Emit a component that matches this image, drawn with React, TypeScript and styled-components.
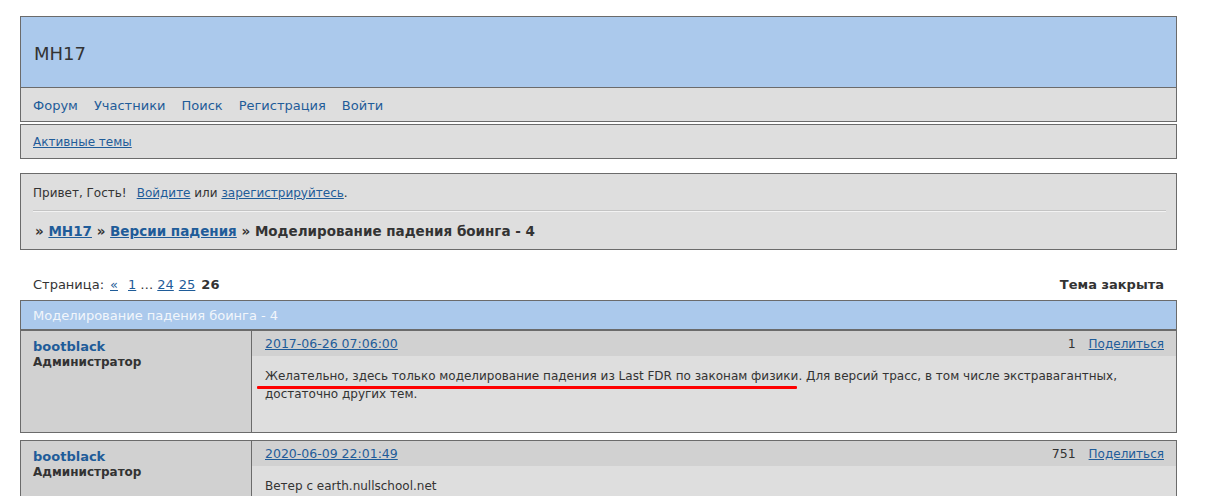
import React from "react";
import styled, { createGlobalStyle } from "styled-components";

const Global = createGlobalStyle`
  html, body { margin: 0; padding: 0; background: #fff; }
  body {
    font-family: "DejaVu Sans", Verdana, sans-serif;
    font-size: 13px;
    color: #333;
  }
  a { color: #1f5c99; }
`;

const Page = styled.div`
  width: 1157px;
  padding: 16px 0 0 20px;
`;

const Box = styled.div<{ $mt?: number }>`
  border: 1px solid #6b6b6b;
  background: #dedede;
  margin-top: ${(p) => p.$mt ?? 0}px;
`;

const Title = styled.div`
  height: 71px;
  background: #abc9ec;
  border-bottom: 1px solid #6b6b6b;
  display: flex;
  align-items: center;
  padding-left: 13px;
  padding-top: 2px;
  box-sizing: border-box;
  font-size: 18px;
  color: #333;
`;

const Nav = styled.div`
  height: 33px;
  display: flex;
  align-items: center;
  gap: 16px;
  padding-left: 12px;
  padding-top: 1px;
  box-sizing: border-box;
`;

const NavLink = styled.a`
  text-decoration: none;
  font-size: 13px;
`;

const SubNav = styled.div`
  height: 33px;
  display: flex;
  align-items: center;
  padding-left: 12px;
  font-size: 12px;
`;

const Welcome = styled.div`
  font-size: 12px;
  padding: 11px 12px 0;
  height: 26px;
  box-sizing: border-box;
  display: flex;
  align-items: center;
`;

const Gap = styled.span`
  display: inline-block;
  width: 10px;
`;

const Rule = styled.div`
  margin: 10px 10px 0 12px;
  border-top: 1px solid #c4c4c4;
  border-bottom: 1px solid #f2f2f2;
`;

const Crumbs = styled.div`
  height: 37px;
  display: flex;
  align-items: center;
  padding-left: 14px;
  font-weight: bold;
  font-size: 13.5px;
  color: #333;
  white-space: pre;
`;

const PagerRow = styled.div`
  height: 50px;
  display: flex;
  align-items: flex-end;
  justify-content: space-between;
  padding: 0 13px 8px 13px;
  box-sizing: border-box;
`;

const Pager = styled.div`
  display: flex;
  align-items: center;
`;

const PagerItem = styled.span<{ $ml: number }>`
  margin-left: ${(p) => p.$ml}px;
`;

const PagerLink = styled.a<{ $ml: number }>`
  margin-left: ${(p) => p.$ml}px;
`;

const Closed = styled.div`
  font-weight: bold;
`;

const ThreadHead = styled.div`
  height: 28px;
  background: #abc9ec;
  border-bottom: 1px solid #6b6b6b;
  display: flex;
  align-items: center;
  padding-left: 12px;
  color: #f2f6fb;
`;

const Post = styled.div`
  display: grid;
  grid-template-columns: 231px 1fr;
  min-height: 101px;
`;

const Author = styled.div`
  background: #d1d1d1;
  border-right: 1px solid #6b6b6b;
  padding: 8px 12px 9px;
`;

const Name = styled.a`
  display: block;
  font-weight: bold;
  font-size: 13px;
  text-decoration: none;
  line-height: 16px;
`;

const Role = styled.div`
  font-weight: bold;
  font-size: 12px;
  line-height: 14px;
`;

const Main = styled.div`
  display: flex;
  flex-direction: column;
`;

const PostHead = styled.div`
  height: 25px;
  background: #d1d1d1;
  display: flex;
  align-items: center;
  justify-content: space-between;
  padding: 0 12px 0 13px;
  font-size: 12.5px;
`;

const Meta = styled.div`
  display: flex;
  gap: 13px;
  align-items: center;
`;

const Share = styled.a`
  font-size: 12px;
`;

const Body = styled.div`
  padding: 11px 13px 12px;
  line-height: 18px;
  font-size: 12px;
  position: relative;
`;

const Mark = styled.span`
  position: absolute;
  left: 5px;
  top: 30px;
  width: 540px;
  height: 3px;
  background: #ff0000;
  border-radius: 1px;
`;

const PostBox = styled.div<{ $mt?: number }>`
  border: 1px solid #6b6b6b;
  border-top: ${(p) => (p.$mt ? "1px solid #6b6b6b" : "none")};
  margin-top: ${(p) => p.$mt ?? 0}px;
  background: #dedede;
`;

export default function App() {
  return (
    <>
      <Global />
      <Page>
        <Box>
          <Title>MH17</Title>
          <Nav>
            <NavLink href="#">Форум</NavLink>
            <NavLink href="#">Участники</NavLink>
            <NavLink href="#">Поиск</NavLink>
            <NavLink href="#">Регистрация</NavLink>
            <NavLink href="#">Войти</NavLink>
          </Nav>
        </Box>
        <Box $mt={2}>
          <SubNav>
            <a href="#">Активные темы</a>
          </SubNav>
        </Box>
        <Box $mt={14}>
          <Welcome>
            Привет, Гость!<Gap />
            <a href="#">Войдите</a>&nbsp;или&nbsp;<a href="#">зарегистрируйтесь</a>.
          </Welcome>
          <Rule />
          <Crumbs>
            {"» "}
            <a href="#">MH17</a>
            {" » "}
            <a href="#">Версии падения</a>
            {" » Моделирование падения боинга - 4"}
          </Crumbs>
        </Box>
        <PagerRow>
          <Pager>
            <span>Страница:</span>
            <PagerLink $ml={6} href="#">«</PagerLink>
            <PagerLink $ml={10} href="#">1</PagerLink>
            <PagerItem $ml={4}>…</PagerItem>
            <PagerLink $ml={4} href="#">24</PagerLink>
            <PagerLink $ml={5} href="#">25</PagerLink>
            <PagerItem $ml={6}><b>26</b></PagerItem>
          </Pager>
          <Closed>Тема закрыта</Closed>
        </PagerRow>
        <Box>
          <ThreadHead>Моделирование падения боинга - 4</ThreadHead>
        </Box>
        <PostBox>
          <Post>
            <Author>
              <Name href="#">bootblack</Name>
              <Role>Администратор</Role>
            </Author>
            <Main>
              <PostHead>
                <a href="#">2017-06-26 07:06:00</a>
                <Meta>
                  <span>1</span>
                  <Share href="#">Поделиться</Share>
                </Meta>
              </PostHead>
              <Body>
                Желательно, здесь только моделирование падения из Last FDR по законам физики. Для версий трасс, в том числе экстравагантных,
                <br />
                достаточно других тем.
                <Mark />
              </Body>
            </Main>
          </Post>
        </PostBox>
        <PostBox $mt={7}>
          <Post>
            <Author>
              <Name href="#">bootblack</Name>
              <Role>Администратор</Role>
            </Author>
            <Main>
              <PostHead>
                <a href="#">2020-06-09 22:01:49</a>
                <Meta>
                  <span>751</span>
                  <Share href="#">Поделиться</Share>
                </Meta>
              </PostHead>
              <Body>Ветер с earth.nullschool.net</Body>
            </Main>
          </Post>
        </PostBox>
      </Page>
    </>
  );
}
